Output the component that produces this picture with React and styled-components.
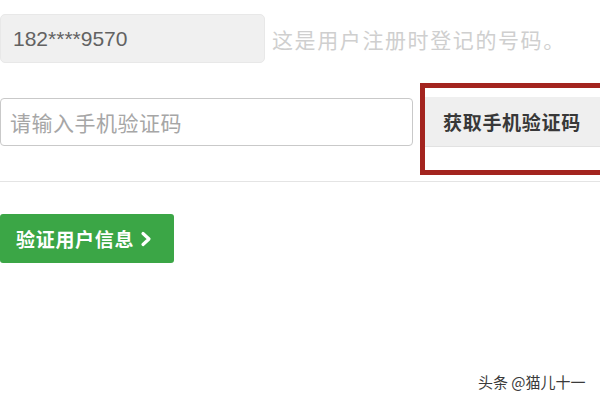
import React from 'react';
import styled, { createGlobalStyle } from 'styled-components';

const GlobalStyle = createGlobalStyle`
  html, body {
    margin: 0;
    padding: 0;
    background: #ffffff;
  }
  body {
    font-family: "Noto Sans CJK SC", "Liberation Sans", sans-serif;
    overflow: hidden;
  }
`;

const Page = styled.div`
  position: relative;
  width: 600px;
  height: 400px;
  overflow: hidden;
  background: #fff;
`;

const Form = styled.div`
  display: flex;
  flex-direction: column;
  padding-top: 14px;
`;

const Row = styled.div`
  display: flex;
  align-items: center;
  gap: ${(p) => p.gap || 0}px;
  margin-top: ${(p) => p.top || 0}px;
  & > * {
    flex: 0 0 auto;
  }
`;

const PhoneBox = styled.div`
  box-sizing: border-box;
  width: 265px;
  height: 49px;
  display: flex;
  align-items: center;
  padding-left: 12px;
  background: #f0f0f0;
  border: 1px solid #e8e8e8;
  border-radius: 5px;
  font-family: "Liberation Sans", Arial, sans-serif;
  font-size: 21px;
  color: #626262;
`;

const Hint = styled.span`
  font-size: 21px;
  letter-spacing: 1.6px;
  color: #cfcfcf;
  white-space: nowrap;
`;

const CodeInput = styled.input`
  box-sizing: border-box;
  width: 413px;
  height: 48px;
  margin: 0;
  padding: 0 0 0 9px;
  border: 1px solid #c9c9c9;
  border-radius: 4px;
  outline: none;
  font-family: "Noto Sans CJK SC", sans-serif;
  font-size: 21px;
  letter-spacing: 0.5px;
  &::placeholder {
    color: #a6a6a6;
  }
`;

const ButtonWrap = styled.div`
  position: relative;
`;

const GreyButton = styled.button`
  box-sizing: border-box;
  width: 220px;
  height: 50px;
  margin: 0;
  padding: 0 0 0 18px;
  text-align: left;
  border: none;
  background: #efefef;
  border-bottom: 1px solid #e2e2e2;
  font-family: "Noto Sans CJK SC", sans-serif;
  font-weight: 700;
  font-size: 19px;
  letter-spacing: 0.7px;
  color: #383838;
`;

const RedFrame = styled.div`
  position: absolute;
  left: -5px;
  top: -14px;
  width: 240px;
  height: 92px;
  box-sizing: border-box;
  border: 5px solid #a3241f;
  pointer-events: none;
`;

const Divider = styled.hr`
  width: 100%;
  margin: 34px 0 0;
  border: none;
  border-top: 1px solid #e4e4e4;
`;

const GreenButton = styled.button`
  align-self: flex-start;
  box-sizing: border-box;
  width: 174px;
  height: 49px;
  margin: 32px 0 0;
  padding: 0 0 0 16px;
  display: flex;
  align-items: center;
  gap: 6px;
  border: none;
  border-radius: 3px;
  background: #3ba646;
  color: #ffffff;
  font-family: "Noto Sans CJK SC", sans-serif;
  font-weight: 700;
  font-size: 19px;
  letter-spacing: 0.7px;
`;

const Watermark = styled.div`
  position: absolute;
  left: 478px;
  bottom: 8px;
  font-size: 15px;
  color: #3a3a3a;
  white-space: nowrap;
`;

const Chevron = () => (
  <svg width="12" height="16" viewBox="0 0 12 16">
    <path d="M3 2.5 L9 8 L3 13.5" fill="none" stroke="#fff" strokeWidth="3.2" strokeLinecap="round" strokeLinejoin="round" />
  </svg>
);

export default function App() {
  return (
    <>
      <GlobalStyle />
      <Page>
        <Form>
          <Row gap={7}>
            <PhoneBox>182****9570</PhoneBox>
            <Hint>这是用户注册时登记的号码。</Hint>
          </Row>
          <Row gap={12} top={34}>
            <CodeInput placeholder="请输入手机验证码" />
            <ButtonWrap>
              <GreyButton>获取手机验证码</GreyButton>
              <RedFrame />
            </ButtonWrap>
          </Row>
          <Divider />
          <GreenButton>
            验证用户信息
            <Chevron />
          </GreenButton>
        </Form>
        <Watermark>头条 @猫儿十一</Watermark>
      </Page>
    </>
  );
}
